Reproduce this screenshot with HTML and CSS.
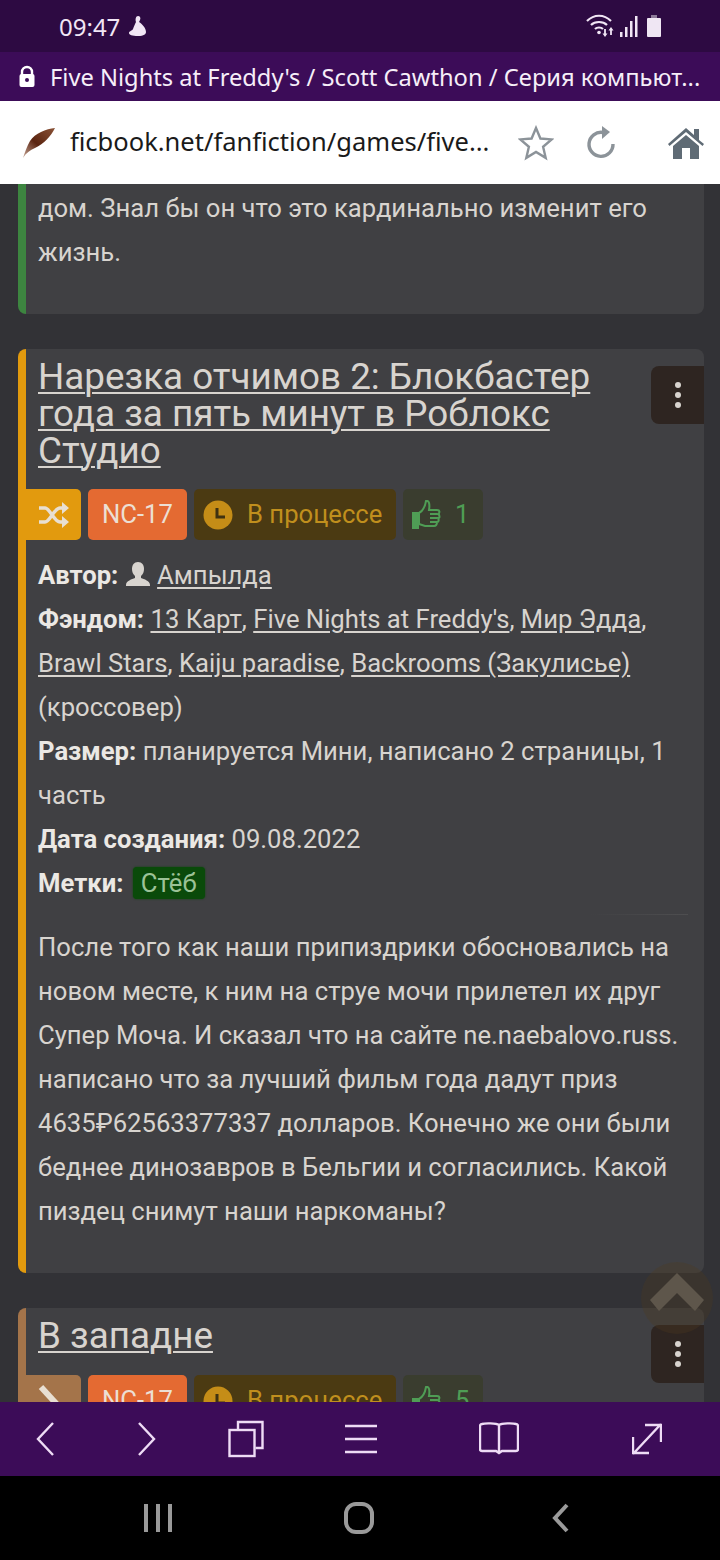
FILE: index.html
```html
<!DOCTYPE html>
<html lang="ru">
  <head>
    <meta charset="UTF-8" />
    <title>Five Nights at Freddy's</title>
    <link rel="stylesheet" href="styles.css">
  </head>
  <body>
    <div class="status-bar">
      <div class="status-left">
        <span>09:47</span>
        <svg width="20" height="24" viewBox="0 0 20 24"><path d="M10 2c2 0 3 2 2 4l-1 2c3 2 7 6 7 10 0 2-2 4-8 4s-9-1-9-3c0-2 3-2 4-4 1-3 2-5 3-7-1-3 0-6 2-6z" fill="#f1e6f5"/></svg>
      </div>
      <div class="status-right">
        <svg width="32" height="24" viewBox="0 0 32 24" fill="none" stroke="#f1e6f5" stroke-width="2.200"><path d="M1 7c7-7 17-7 24 0M5 11c4-4 12-4 16 0M9 15c2-2 6-2 8 0"/><circle cx="13" cy="18.500" r="1.800" fill="#f1e6f5" stroke="none"/><path d="M19 15v6M25 21v-6" stroke-width="1.800"/><path d="M16.500 19.500h5L19 23zM22.500 16.500h5L25 13z" fill="#f1e6f5" stroke="none"/></svg>
        <svg class="signal" width="18" height="24" viewBox="0 0 18 24" fill="#f1e6f5"><rect x="0" y="18" width="2.500" height="5"/><rect x="5" y="13" width="2.500" height="10"/><rect x="10" y="7" width="2.500" height="16"/><rect x="15" y="2" width="2.500" height="21"/></svg>
        <svg class="battery" width="14" height="24" viewBox="0 0 14 24" fill="#efe6f3"><rect x="4" y="1" width="6" height="3" fill="#8d7a99"/><rect x="0" y="4" width="14" height="19" rx="1"/></svg>
      </div>
    </div>

    <div class="title-bar">
      <svg width="18" height="24" viewBox="0 0 18 24"><path d="M4 10V7a5 5 0 0 1 10 0v3" fill="none" stroke="#fff" stroke-width="2.400"/><rect x="1.500" y="9" width="15" height="13" rx="2" fill="#fff"/><circle cx="9" cy="15" r="2" fill="#3c0c58"/></svg>
      <span class="title-text">Five Nights at Freddy's / Scott Cawthon / Серия компьют...</span>
    </div>

    <div class="url-bar">
      <svg class="feather" width="34" height="32" viewBox="0 0 34 32">
        <defs>
          <linearGradient id="feather-fill" x1="0" y1="1" x2="1" y2="0">
            <stop offset="0" stop-color="#c9a898"/>
            <stop offset="0.45" stop-color="#5a2410"/>
            <stop offset="1" stop-color="#8a5236"/>
          </linearGradient>
        </defs>
        <path d="M33 1C24 2 13 6 8 14 5 19 3 25 1 31c3-5 7-8 12-10C22 17 29 9 33 1z" fill="url(#feather-fill)"/>
      </svg>
      <span class="url-text">ficbook.net/fanfiction/games/five...</span>
      <svg class="star" width="36" height="36" viewBox="0 0 36 36"><path d="M18 3l4.400 10.500 11.300.9-8.600 7.400 2.600 11.100L18 27l-9.700 5.900 2.600-11.100-8.600-7.400 11.300-.9z" fill="none" stroke="#8c9399" stroke-width="2.400"/></svg>
      <svg class="reload" width="30" height="34" viewBox="0 0 30 34"><path d="M17 6.500a12 12 0 1 0 10 11.500" fill="none" stroke="#8c9399" stroke-width="3.400"/><path d="M16 0v13l8-7z" fill="#8c9399"/></svg>
      <svg class="home" width="38" height="34" viewBox="0 0 38 34"><path d="M1 18L19 2l8 7V3h5v11l5 4-1.500 2L19 6 2.500 20z M19 9L6 20v13h9V22h8v11h9V20z" fill="#5f6b75"/></svg>
    </div>

    <div class="content">
      <div class="card card-first green">
        <p class="line">дом. Знал бы он что это кардинально изменит его</p>
        <p class="line">жизнь.</p>
      </div>

      <div class="card orange">
        <a class="card-title">Нарезка отчимов 2: Блокбастер года за пять минут в Роблокс Студио</a>
        <div class="menu-btn"><i></i><i></i><i></i></div>
        <div class="badges">
          <div class="badge badge-dir orange-bg">
            <svg width="32" height="26" viewBox="0 0 32 26" fill="none" stroke="#e8dfd2" stroke-width="3.400"><path d="M1 6h6c5 0 9 14 15 14h5M1 20h6c5 0 9-14 15-14h5"/><path d="M24 0l7 6-7 6zM24 14l7 6-7 6z" fill="#e8dfd2" stroke="none"/></svg>
          </div>
          <div class="badge badge-rating">NC-17</div>
          <div class="badge badge-status">
            <svg width="30" height="30" viewBox="0 0 30 30"><circle cx="15" cy="15" r="14.500" fill="#c58d17"/><path d="M14 8v9h8" fill="none" stroke="#3f3211" stroke-width="3"/></svg>
            <span>В процессе</span>
          </div>
          <div class="badge badge-likes">
            <svg width="30" height="30" viewBox="0 0 30 30"><path d="M1 12h7v17H1z" fill="#4f9d55"/><path d="M8 13c4-2 6-6 7-12 3-1 4 3 3 9h8c3 0 3 3 1 4 2 1 2 4 0 4 1 2 1 4-1 4 0 3-1 4-3 4H14l-6-2zM19 14h7M19 18h7M19 22h6" fill="none" stroke="#4f9d55" stroke-width="2"/></svg>
            <span>1</span>
          </div>
        </div>
        <div class="info">
          <div><b>Автор:</b> <svg class="user" width="26" height="26" viewBox="0 0 26 26"><path d="M13 1c4 0 6 3 6 7 0 3-1 5-3 7v2c3 1 9 3 9 7v1H1v-1c0-4 6-6 9-7v-2c-2-2-3-4-3-7 0-4 2-7 6-7z" fill="#d8d4cf"/></svg> <a>Ампылда</a></div>
          <div><b>Фэндом:</b> <a>13 Карт</a>, <a>Five Nights at Freddy's</a>, <a>Мир Эдда</a>, <a>Brawl Stars</a>, <a>Kaiju paradise</a>, <a>Backrooms (Закулисье)</a> (кроссовер)</div>
          <div><b>Размер:</b> планируется Мини, написано 2 страницы, 1 часть</div>
          <div><b>Дата создания:</b> 09.08.2022</div>
          <div><b>Метки:</b> <span class="tag">Стёб</span></div>
        </div>
        <div class="divider"></div>
        <p class="desc">После того как наши припиздрики обосновались на новом месте, к ним на струе мочи прилетел их друг Супер Моча. И сказал что на сайте ne.naebalovo.russ. написано что за лучший фильм года дадут приз 4635₽62563377337 долларов. Конечно же они были беднее динозавров в Бельгии и согласились. Какой пиздец снимут наши наркоманы?</p>
      </div>

      <div class="card brown">
        <a class="card-title">В западне</a>
        <div class="menu-btn"><i></i><i></i><i></i></div>
        <div class="badges">
          <div class="badge badge-dir brown-bg">
            <svg width="32" height="34" viewBox="0 0 32 34" fill="none" stroke="#e8dfd2" stroke-width="6"><path d="M3 3l22 24"/></svg>
          </div>
          <div class="badge badge-rating">NC-17</div>
          <div class="badge badge-status">
            <svg width="30" height="30" viewBox="0 0 30 30"><circle cx="15" cy="15" r="14.500" fill="#c58d17"/><path d="M14 8v9h8" fill="none" stroke="#3f3211" stroke-width="3"/></svg>
            <span>В процессе</span>
          </div>
          <div class="badge badge-likes">
            <svg width="30" height="30" viewBox="0 0 30 30"><path d="M1 12h7v17H1z" fill="#4f9d55"/><path d="M8 13c4-2 6-6 7-12 3-1 4 3 3 9h8c3 0 3 3 1 4 2 1 2 4 0 4 1 2 1 4-1 4 0 3-1 4-3 4H14l-6-2zM19 14h7M19 18h7M19 22h6" fill="none" stroke="#4f9d55" stroke-width="2"/></svg>
            <span>5</span>
          </div>
        </div>
      </div>

      <div class="to-top">
        <svg width="56" height="40" viewBox="0 0 56 40"><path d="M28 1L55 28 46 39 28 21 10 39 1 28z" fill="#5e564b"/></svg>
      </div>
    </div>

    <div class="toolbar">
      <svg class="tool-back" width="18" height="36" viewBox="0 0 18 36"><path d="M17 2L2 18l15 16" class="tool-stroke"/></svg>
      <svg class="tool-forward" width="18" height="36" viewBox="0 0 18 36"><path d="M1 2l15 16L1 34" class="tool-stroke"/></svg>
      <svg class="tool-tabs" width="36" height="38" viewBox="0 0 36 38"><rect x="1.500" y="10" width="25" height="26" class="tool-stroke"/><path d="M10 9V2h24.500v26h-7" class="tool-stroke"/></svg>
      <svg class="tool-menu" width="34" height="30" viewBox="0 0 34 30"><path d="M1 2h32M1 15h32M1 28h32" class="tool-stroke"/></svg>
      <svg class="tool-book" width="40" height="36" viewBox="0 0 40 36"><path d="M20 4c-3-2-14-2-17-1-1 0-2 1-2 2v23c0 2 1 2 2 2h14l3 2 3-2h14c1 0 2 0 2-2V5c0-1-1-2-2-2-3-1-14-1-17 1zv28" class="tool-stroke"/></svg>
      <svg class="tool-expand" width="30" height="32" viewBox="0 0 30 32"><path d="M1 31L29 1M13 2h16v17M17 30H1V14" class="tool-stroke"/></svg>
    </div>

    <div class="nav-bar">
      <svg class="nav-recent" width="28" height="30" viewBox="0 0 28 30"><path d="M2 1v28M14 1v28M26 1v28" class="nav-stroke"/></svg>
      <svg class="nav-home" width="30" height="32" viewBox="0 0 30 32"><rect x="2" y="2" width="26" height="28" rx="10" class="nav-stroke"/></svg>
      <svg class="nav-back" width="18" height="30" viewBox="0 0 18 30"><path d="M15 2L3 15l12 13" class="nav-stroke"/></svg>
    </div>
  </body>
</html>
```

FILE: styles.css
```css
* {
  box-sizing: border-box;
}
body {
  width: 720px;
  height: 1560px;
  margin: 0;
  display: flex;
  flex-direction: column;
  overflow: hidden;
  font-family: Roboto, Arial, sans-serif;
  background-color: #323236;
}
.status-bar {
  height: 52px;
  flex: none;
  display: flex;
  align-items: center;
  justify-content: space-between;
  padding: 0 59px;
  background-color: #2d0a42;
  color: #f1e6f5;
  font-family: "Noto Sans", sans-serif;
  font-size: 24px;
}
.status-left,
.status-right {
  display: flex;
  align-items: center;
  gap: 8px;
}
.status-right {
  gap: 2px;
}
.battery {
  margin-left: 7px;
}
.title-bar {
  height: 49px;
  flex: none;
  display: flex;
  align-items: center;
  gap: 14px;
  padding: 0 17px 0 18px;
  background-color: #3c0c58;
  color: #f6eef8;
  font-family: "Noto Sans", sans-serif;
  font-size: 23.700px;
  white-space: nowrap;
  overflow: hidden;
}
.url-bar {
  height: 83px;
  flex: none;
  display: flex;
  align-items: center;
  padding: 0 15px 0 22px;
  background-color: #fff;
  color: #1a1a1a;
  font-family: "Noto Sans", sans-serif;
  font-size: 25.500px;
}
.url-text {
  margin-left: 14px;
  padding-bottom: 4px;
  flex: 1;
  white-space: nowrap;
}
.star {
  margin-right: 32px;
}
.reload {
  margin-right: 51px;
}
.content {
  flex: 1;
  position: relative;
  overflow: hidden;
  padding: 0 16px 0 18px;
  background-color: #323236;
  color: #d8d4cf;
  font-size: 25.650px;
  line-height: 44px;
}
.card {
  position: relative;
  margin-bottom: 35px;
  padding: 9px 16px 40px 12px;
  border-left: 8px solid;
  border-radius: 8px;
  background-color: #404043;
}
.card-first {
  padding-top: 2px;
  padding-bottom: 40px;
  border-radius: 0 0 8px 8px;
}
.green {
  border-left-color: #3d8540;
}
.orange {
  border-left-color: #e29a0e;
}
.brown {
  border-left-color: #a4744a;
}
.line {
  margin: 0;
}
.card-title {
  display: block;
  padding-right: 60px;
  font-size: 36.800px;
  line-height: 37px;
  text-decoration: underline;
  text-decoration-thickness: 2px;
  text-underline-offset: 3px;
}
.menu-btn {
  position: absolute;
  top: 17px;
  right: 0;
  width: 53px;
  height: 58px;
  display: flex;
  flex-direction: column;
  align-items: center;
  justify-content: center;
  gap: 4px;
  border-radius: 8px 0 0 8px;
  background-color: #2e2521;
}
.menu-btn i {
  width: 6px;
  height: 6px;
  border-radius: 50%;
  background-color: #d8d4cf;
}
.badges {
  display: flex;
  gap: 7px;
  margin: 20px 0 13px -12px;
  line-height: 1;
}
.brown .badges {
  margin-top: 21px;
}
.badge {
  height: 51px;
  display: flex;
  align-items: center;
  border-radius: 5px;
}
.badge-dir {
  width: 55px;
  justify-content: center;
  border-radius: 0 5px 5px 0;
}
.orange-bg {
  background-color: #e29a0e;
}
.brown-bg {
  background-color: #a4744a;
}
.badge-rating {
  width: 99px;
  justify-content: center;
  background-color: #e46a32;
  color: #ecdfd3;
}
.badge-status {
  width: 202px;
  gap: 14px;
  padding-left: 9px;
  background-color: #4b3a12;
  color: #c08f1d;
}
.badge-likes {
  width: 80px;
  gap: 14px;
  padding-left: 8px;
  background-color: #3a3d2f;
  color: #4f9d55;
}
.info a {
  text-decoration: underline;
  text-underline-offset: 3px;
}
.info b {
  font-weight: 700;
  color: #ebe8e4;
}
.user {
  vertical-align: -3px;
}
.tag {
  display: inline-block;
  margin-left: 3px;
  padding: 0 8px;
  line-height: 32px;
  border-radius: 4px;
  background-color: #0a4a0a;
  box-shadow: 0 0 2px #0a4a0a;
  color: #9cc297;
}
.divider {
  height: 1px;
  margin: 9px 0 10px;
  background: linear-gradient(to right, transparent 85%, #4e4e50);
}
.desc {
  margin: 0;
}
.to-top {
  position: absolute;
  top: 1078px;
  left: 641px;
  width: 72px;
  height: 72px;
  display: flex;
  align-items: flex-start;
  justify-content: center;
  padding-top: 10px;
  border-radius: 50%;
  background-color: rgba(80, 60, 30, 0.3);
}
.toolbar {
  height: 74px;
  flex: none;
  display: flex;
  align-items: center;
  padding-left: 36px;
  background-color: #3c0c58;
}
.tool-forward {
  margin-left: 84px;
}
.tool-tabs {
  margin-left: 72px;
}
.tool-menu {
  margin-left: 80px;
}
.tool-book {
  margin-left: 101px;
}
.tool-expand {
  margin-left: 113px;
}
.tool-stroke {
  fill: none;
  stroke: #eedcf5;
  stroke-width: 2.400;
}
.nav-bar {
  height: 84px;
  flex: none;
  display: flex;
  align-items: center;
  padding-left: 144px;
  background-color: #000;
}
.nav-home {
  margin-left: 172px;
}
.nav-back {
  margin-left: 178px;
}
.nav-stroke {
  fill: none;
  stroke: #9a9a9a;
  stroke-width: 4;
}
```
